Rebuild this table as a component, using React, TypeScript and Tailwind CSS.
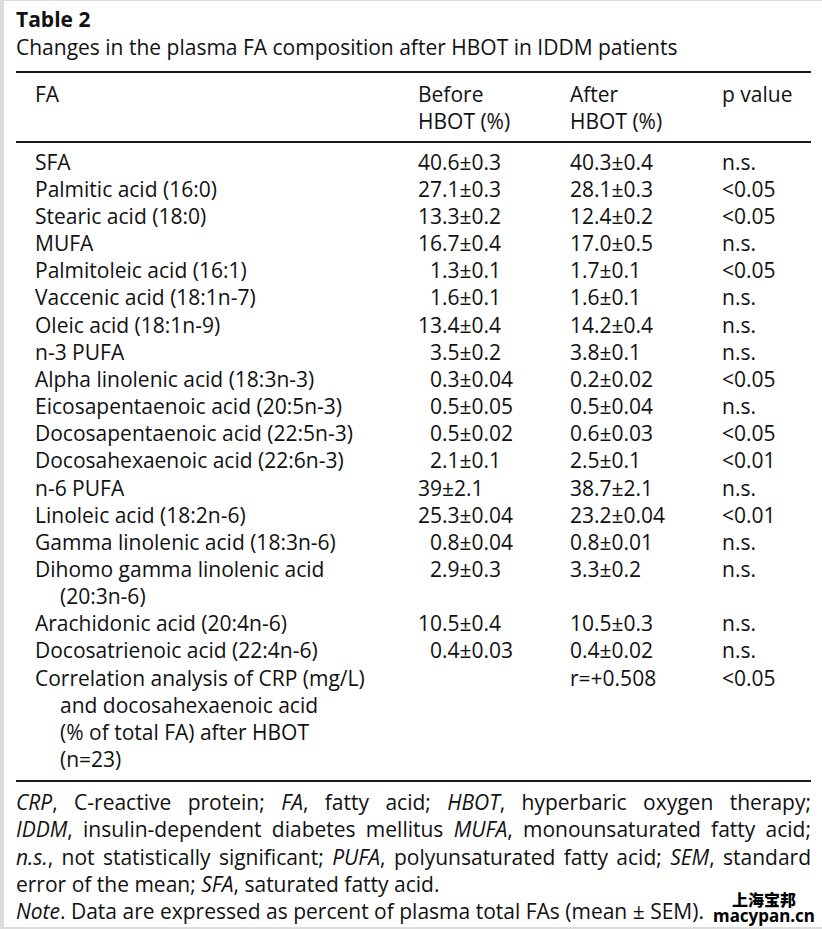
import React from 'react';

type Row = { fa: string[]; before?: string; pad?: boolean; after?: string; p?: string };

const rows: Row[] = [
  { fa: ['SFA'], before: '40.6±0.3', after: '40.3±0.4', p: 'n.s.' },
  { fa: ['Palmitic acid (16:0)'], before: '27.1±0.3', after: '28.1±0.3', p: '<0.05' },
  { fa: ['Stearic acid (18:0)'], before: '13.3±0.2', after: '12.4±0.2', p: '<0.05' },
  { fa: ['MUFA'], before: '16.7±0.4', after: '17.0±0.5', p: 'n.s.' },
  { fa: ['Palmitoleic acid (16:1)'], before: '1.3±0.1', pad: true, after: '1.7±0.1', p: '<0.05' },
  { fa: ['Vaccenic acid (18:1n-7)'], before: '1.6±0.1', pad: true, after: '1.6±0.1', p: 'n.s.' },
  { fa: ['Oleic acid (18:1n-9)'], before: '13.4±0.4', after: '14.2±0.4', p: 'n.s.' },
  { fa: ['n-3 PUFA'], before: '3.5±0.2', pad: true, after: '3.8±0.1', p: 'n.s.' },
  { fa: ['Alpha linolenic acid (18:3n-3)'], before: '0.3±0.04', pad: true, after: '0.2±0.02', p: '<0.05' },
  { fa: ['Eicosapentaenoic acid (20:5n-3)'], before: '0.5±0.05', pad: true, after: '0.5±0.04', p: 'n.s.' },
  { fa: ['Docosapentaenoic acid (22:5n-3)'], before: '0.5±0.02', pad: true, after: '0.6±0.03', p: '<0.05' },
  { fa: ['Docosahexaenoic acid (22:6n-3)'], before: '2.1±0.1', pad: true, after: '2.5±0.1', p: '<0.01' },
  { fa: ['n-6 PUFA'], before: '39±2.1', after: '38.7±2.1', p: 'n.s.' },
  { fa: ['Linoleic acid (18:2n-6)'], before: '25.3±0.04', after: '23.2±0.04', p: '<0.01' },
  { fa: ['Gamma linolenic acid (18:3n-6)'], before: '0.8±0.04', pad: true, after: '0.8±0.01', p: 'n.s.' },
  { fa: ['Dihomo gamma linolenic acid', '(20:3n-6)'], before: '2.9±0.3', pad: true, after: '3.3±0.2', p: 'n.s.' },
  { fa: ['Arachidonic acid (20:4n-6)'], before: '10.5±0.4', after: '10.5±0.3', p: 'n.s.' },
  { fa: ['Docosatrienoic acid (22:4n-6)'], before: '0.4±0.03', pad: true, after: '0.4±0.02', p: 'n.s.' },
  {
    fa: ['Correlation analysis of CRP (mg/L)', 'and docosahexaenoic acid', '(% of total FA) after HBOT', '(n=23)'],
    after: 'r=+0.508',
    p: '<0.05',
  },
];

const App = () => {
  return (
    <div
      className="relative w-[822px] h-[929px] bg-white border-l-4 border-t border-b-2 border-[#dcdcdc] pl-3 pr-[11px] pt-[5px] text-[#111] text-[21px] leading-[27.15px]"
      style={{ fontFamily: '"Open Sans", "Noto Sans", sans-serif' }}
    >
      {/* Caption */}
      <div className="font-bold">Table 2</div>
      <div className="mt-[1px]">Changes in the plasma FA composition after HBOT in IDDM patients</div>

      <div className="mt-[10px] border-t-2 border-[#1a1a1a]" />

      {/* Header */}
      <div className="grid grid-cols-[383px_152px_152px_1fr] pl-[19px] pt-[8px] pb-[5px] border-b-2 border-[#1a1a1a]">
        <div>FA</div>
        <div>
          <div>Before</div>
          <div>HBOT (%)</div>
        </div>
        <div>
          <div>After</div>
          <div>HBOT (%)</div>
        </div>
        <div>p value</div>
      </div>

      {/* Body */}
      <div className="pl-[19px] pt-[6px] pb-[7px] border-b-2 border-[#1a1a1a]">
        {rows.map((r, i) => (
          <div key={i} className="grid grid-cols-[383px_152px_152px_1fr]">
            <div>
              {r.fa.map((line, j) => (
                <div key={j} className={j > 0 ? 'pl-[25px]' : ''}>
                  {line}
                </div>
              ))}
            </div>
            <div className={r.pad ? 'pl-[12px]' : ''}>{r.before}</div>
            <div>{r.after}</div>
            <div>{r.p}</div>
          </div>
        ))}
      </div>

      {/* Footnote */}
      <div className="pt-[7px]">
        <p className="text-justify [text-align-last:justify] whitespace-nowrap">
          <i>CRP</i>, C-reactive protein; <i>FA</i>, fatty acid; <i>HBOT</i>, hyperbaric oxygen therapy;
        </p>
        <p className="text-justify [text-align-last:justify] whitespace-nowrap">
          <i>IDDM</i>, insulin-dependent diabetes mellitus <i>MUFA</i>, monounsaturated fatty acid;
        </p>
        <p className="text-justify [text-align-last:justify] whitespace-nowrap">
          <i>n.s.</i>, not statistically significant; <i>PUFA</i>, polyunsaturated fatty acid; <i>SEM</i>, standard
        </p>
        <p>
          error of the mean; <i>SFA</i>, saturated fatty acid.
        </p>
        <p className="whitespace-nowrap">
          <i>Note</i>. Data are expressed as percent of plasma total FAs (mean ± SEM).
        </p>
      </div>

      {/* Watermark */}
      <div
        className="absolute left-[710px] top-[890px] w-[100px] flex flex-col items-center font-bold text-black leading-[17px]"
        style={{ fontFamily: '"Noto Sans", "Noto Sans CJK SC", sans-serif' }}
      >
        <span className="text-[16px] font-black" style={{ fontFamily: '"Noto Sans CJK SC", sans-serif' }}>
          上海宝邦
        </span>
        <span className="text-[17px] leading-[15px]">macypan.cn</span>
      </div>
    </div>
  );
};

export default App;
